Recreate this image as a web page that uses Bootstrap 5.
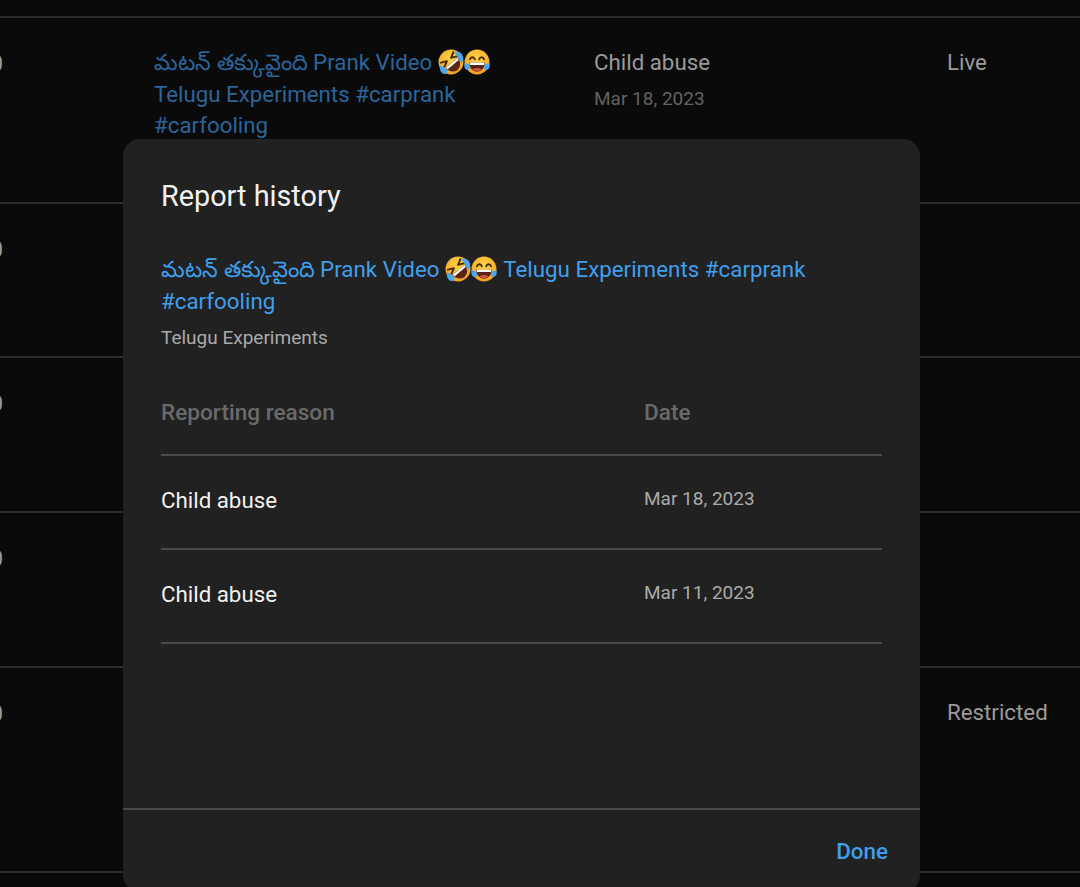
<!DOCTYPE html>
<html lang="en"><head><meta charset="utf-8"><title>Report history</title>
<link href="https://cdn.jsdelivr.net/npm/bootstrap@5.3.0/dist/css/bootstrap.min.css" rel="stylesheet">
<style>
html,body{height:887px;overflow:hidden;background:#0a0a0a;}
body{font-family:Roboto,"Noto Sans",sans-serif;position:relative;}
.yt-row{border-bottom:2px solid #2c2c2c;font-size:22.3px;line-height:31.5px;color:#9a9a9a;padding-top:29px;}
.yt-top{height:18px;padding:0;}
.r1{height:186px}.r2{height:154px}.r3{height:155px}.r4{height:155px}.r5{height:205px}
.c-stub{width:3px;height:32px;overflow:hidden;white-space:nowrap;direction:rtl;flex:none;margin-top:1px}
.c-title{width:345px;margin-left:151px;flex:none;color:#2b659a;}
.c-reason{width:353px;margin-left:95px;flex:none}
.c-status{flex:none}
.dim-date{font-size:19px;color:#626262;line-height:28px;margin-top:6px}
.emo{width:26px;height:26px;vertical-align:-5px;}
.emo-end{margin-right:1px;}
.report-modal{position:absolute;left:123px;top:139px;width:797px;height:753px;background:#212121;border-radius:17px;color:#f1f1f1;overflow:hidden;display:flex;flex-direction:column;}
.report-title{font-size:28.8px;line-height:36px;font-weight:400;margin:0;padding:39px 38px 0;}
.report-body{padding:0 38px;flex:1 1 auto;}
.report-link{display:block;margin-top:39px;font-size:22.35px;line-height:32px;color:#3f9fec;text-decoration:none;}
.report-chan{font-size:19px;line-height:26px;color:#aaa;margin-top:8px;}
.report-head{height:105px;padding-top:48px;border-bottom:2px solid #4a4a4a;font-size:22.6px;font-weight:500;color:#6a6a6a;line-height:28px;}
.report-head .cell-a{color:inherit;font-size:inherit;}
.report-line{height:94px;border-bottom:2px solid #4a4a4a;align-items:center;}
.cell-a{width:483px;flex:none;font-size:22.3px;color:#f1f1f1;padding-bottom:2px;}
.cell-b{font-size:19px;color:#aaa;padding-bottom:5px;}
.report-foot{border-top:2px solid #4a4a4a;height:84px;flex:none;padding:25px 32px 0 0;text-align:right;}
.done-btn{color:#3f9fec;font-size:22.4px;font-weight:500;line-height:32px;padding:0;border:0;background:none;}
</style></head><body>
<svg width="0" height="0" class="position-absolute"><defs>
<radialGradient id="emoFace" cx=".5" cy=".35" r=".75"><stop offset="0" stop-color="#fdd548"/><stop offset="1" stop-color="#f09a1c"/></radialGradient>
<g id="rofl"><circle cx="12" cy="12" r="11.500" fill="url(#emoFace)"/><g transform="rotate(-40 12 12)"><path d="M4.500 6.500l5 2.500-5 2.500M19.500 6.500l-5 2.500 5 2.500" fill="none" stroke="#4a2c0c" stroke-width="1.800" stroke-linecap="round" stroke-linejoin="round"/><path d="M4.500 13h15a7.500 8.500 0 0 1-15 0z" fill="#5a2410"/><path d="M5 13h14l-.4 2.200H5.400z" fill="#fff"/></g><path d="M15 3c3-1 7 0 8 4 .5 3 0 5-1 6-2-2-3-4-4-6zM2 15c2 1 5 3 7 5-1 2-2 4-3 3-3 0-5-4-4-8z" fill="#4aa6ef"/></g>
<g id="joy"><circle cx="12" cy="12" r="11.500" fill="url(#emoFace)"/><path d="M5.500 9.500c.8-2.600 3.700-2.600 4.500 0M14 9.500c.8-2.600 3.700-2.600 4.500 0" fill="none" stroke="#4a2c0c" stroke-width="1.800" stroke-linecap="round"/><path d="M4.500 12.500h15a7.500 8.500 0 0 1-15 0z" fill="#5a2410"/><path d="M5 12.500h14l-.5 2.300h-13z" fill="#fff"/><path d="M7.500 19c2-1.500 7-1.500 9 0-2.500 1.700-6.500 1.700-9 0z" fill="#e0574f"/><path d="M.5 13c-.8 3 .3 6 2.700 6.300 2.300-.2 3.300-2.600 1.800-4.300-1.200-1.200-3-1.500-4.500-2zM23.500 13c.8 3-.3 6-2.700 6.300-2.300-.2-3.300-2.600-1.800-4.300 1.200-1.200 3-1.500 4.500-2z" fill="#4aa6ef"/></g>
</defs></svg>
<div class="yt-row yt-top"></div>
<div class="yt-row r1 d-flex"><div class="c-stub">0</div><div class="c-title">మటన్ తక్కువైంది Prank Video <svg class="emo" viewBox="0 0 24 24"><use href="#rofl"/></svg><svg class="emo" viewBox="0 0 24 24"><use href="#joy"/></svg> Telugu Experiments #carprank #carfooling</div><div class="c-reason">Child abuse<div class="dim-date">Mar 18, 2023</div></div><div class="c-status">Live</div></div>
<div class="yt-row r2 d-flex"><div class="c-stub">0</div></div>
<div class="yt-row r3 d-flex"><div class="c-stub">0</div></div>
<div class="yt-row r4 d-flex"><div class="c-stub">0</div></div>
<div class="yt-row r5 d-flex"><div class="c-stub">0</div><div class="c-title"></div><div class="c-reason"></div><div class="c-status">Restricted</div></div>

<div class="report-modal">
<h2 class="report-title">Report history</h2>
<div class="report-body">
<a class="report-link" href="#">మటన్ తక్కువైంది Prank Video <svg class="emo" viewBox="0 0 24 24"><use href="#rofl"/></svg><svg class="emo emo-end" viewBox="0 0 24 24"><use href="#joy"/></svg> Telugu Experiments #carprank #carfooling</a>
<div class="report-chan">Telugu Experiments</div>
<div class="report-head d-flex"><div class="cell-a">Reporting reason</div><div>Date</div></div>
<div class="report-line d-flex"><div class="cell-a">Child abuse</div><div class="cell-b">Mar 18, 2023</div></div>
<div class="report-line d-flex"><div class="cell-a">Child abuse</div><div class="cell-b">Mar 11, 2023</div></div>
</div>
<div class="report-foot"><button class="done-btn" type="button">Done</button></div>
</div>
<script src="https://cdn.jsdelivr.net/npm/bootstrap@5.3.0/dist/js/bootstrap.bundle.min.js"></script>
</body></html>
